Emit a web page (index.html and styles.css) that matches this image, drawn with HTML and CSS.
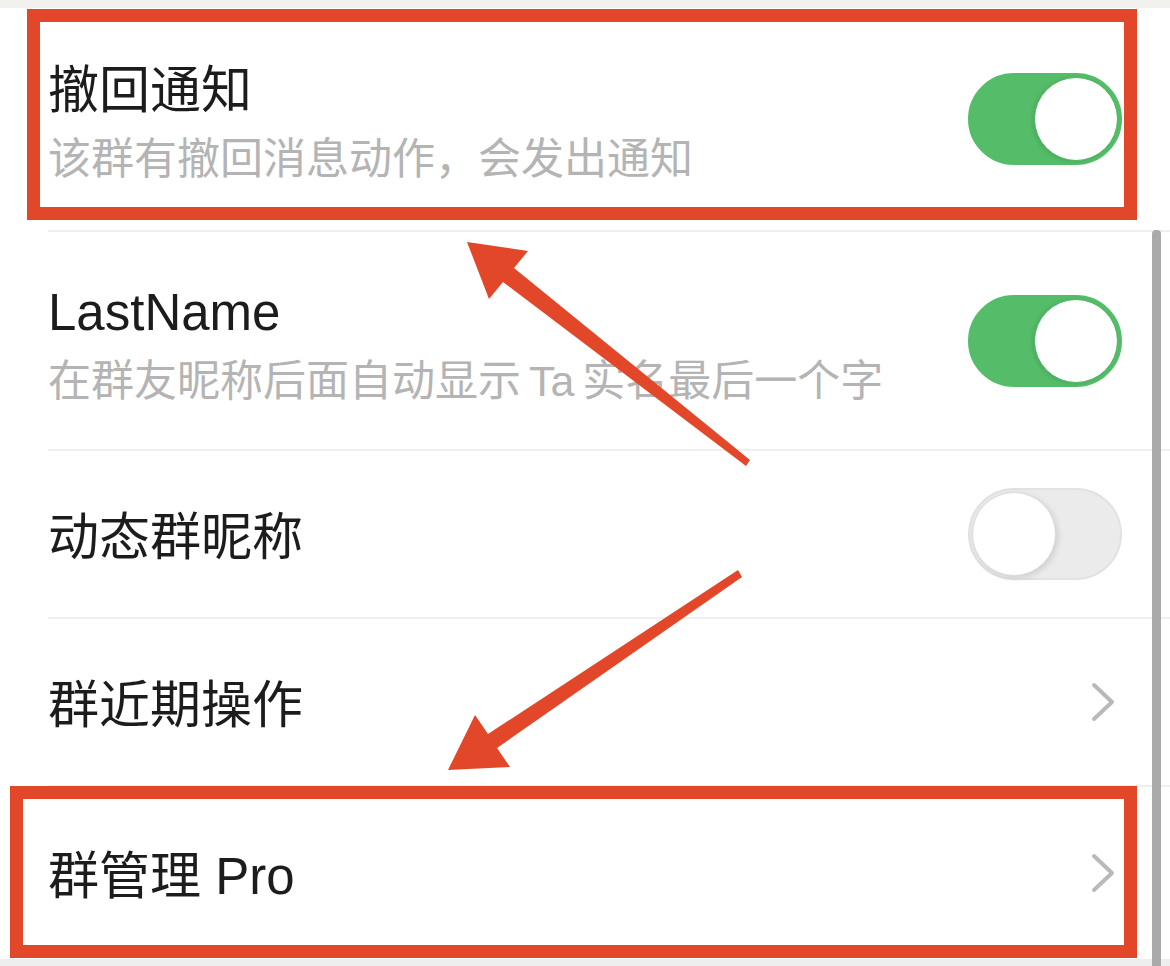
FILE: index.html
```html
<!DOCTYPE html>
<html lang="zh-CN">
<head>
  <meta charset="UTF-8">
  <meta name="viewport" content="width=device-width, initial-scale=1.0">
  <title>群设置</title>
  <link rel="stylesheet" href="styles.css">
</head>
<body>
  <div class="top-strip"></div>

  <ul class="settings">
    <li class="item item-recall">
      <div class="item-text">
        <div class="title">撤回通知</div>
        <div class="desc">该群有撤回消息动作，会发出通知</div>
      </div>
      <span class="switch on"><span class="knob"></span></span>
    </li>
    <li class="item item-lastname">
      <div class="item-text">
        <div class="title">LastName</div>
        <div class="desc">在群友昵称后面自动显示 Ta 实名最后一个字</div>
      </div>
      <span class="switch on"><span class="knob"></span></span>
    </li>
    <li class="item item-short">
      <div class="item-text">
        <div class="title">动态群昵称</div>
      </div>
      <span class="switch"><span class="knob"></span></span>
    </li>
    <li class="item item-short">
      <div class="item-text">
        <div class="title">群近期操作</div>
      </div>
      <svg class="chevron" viewBox="0 0 24 40"><polyline points="3,3 21,20 3,37" /></svg>
    </li>
    <li class="item item-pro">
      <div class="item-text">
        <div class="title">群管理 Pro</div>
      </div>
      <svg class="chevron" viewBox="0 0 24 40"><polyline points="3,3 21,20 3,37" /></svg>
    </li>
  </ul>

  <div class="bottom-strip"></div>

  <!-- annotation overlay -->
  <div class="scroll-thumb"></div>
  <div class="mark mark-top"></div>
  <div class="mark mark-bottom"></div>
  <svg class="arrows" viewBox="0 0 1170 966">
    <polygon points="467,242 528,251 514,268 750,460 746,466 503,282 489,299" />
    <polygon points="448,770 475,715 488,734 738,570 742,577 497,748 510,767" />
  </svg>
</body>
</html>
```

FILE: styles.css
```css
* {
  margin: 0;
  padding: 0;
  box-sizing: border-box;
}

body {
  width: 1170px;
  height: 966px;
  overflow: hidden;
  position: relative;
  background: #ffffff;
  font-family: "Liberation Sans", "Noto Sans CJK SC", sans-serif;
  color: #1c1c1c;
}

.top-strip {
  height: 8px;
  background: #f3f1ee;
}

.bottom-strip {
  height: 8px;
  background: #eeeeee;
}

.settings {
  list-style: none;
}

.item {
  display: flex;
  align-items: center;
  justify-content: space-between;
  margin-left: 48px;
  padding-right: 48px;
  border-bottom: 2px solid #efefef;
}

.item-recall {
  height: 224px;
}

.item-lastname {
  height: 219px;
}

.item-short {
  height: 168px;
}

.item-pro {
  height: 172px;
  border-bottom: none;
}

.item-text {
  display: flex;
  flex-direction: column;
  gap: 12px;
  padding-top: 8px;
}

.title {
  font-size: 51px;
  line-height: 60px;
  color: #1c1c1c;
}

.desc {
  font-size: 43px;
  line-height: 52px;
  color: #b4b4b4;
  word-spacing: -4px;
}

.switch {
  position: relative;
  width: 154px;
  height: 92px;
  border-radius: 46px;
  background: #ebebeb;
  border: 2px solid #e2e2e2;
}

.switch .knob {
  position: absolute;
  top: 2px;
  left: 2px;
  width: 84px;
  height: 84px;
  border-radius: 50%;
  background: #ffffff;
  border: 1px solid #dcdcdc;
  box-shadow: 2px 2px 6px rgba(0, 0, 0, 0.12);
}

.switch.on {
  background: #55bd69;
  border-color: #55bd69;
}

.switch.on .knob {
  left: auto;
  right: 2px;
  border-color: #4fb563;
  box-shadow: -2px 1px 4px rgba(0, 0, 0, 0.1);
}

.chevron {
  width: 24px;
  height: 40px;
  margin-right: 7px;
}

.chevron polyline {
  fill: none;
  stroke: #b9b9b9;
  stroke-width: 4;
  stroke-linecap: round;
  stroke-linejoin: round;
}

.scroll-thumb {
  position: absolute;
  left: 1152px;
  top: 230px;
  width: 9px;
  height: 736px;
  background: #aaaaaa;
  border-radius: 4px 4px 0 0;
}

.mark {
  position: absolute;
  border: 13px solid #e2472a;
}

.mark-top {
  left: 27px;
  top: 9px;
  width: 1110px;
  height: 211px;
}

.mark-bottom {
  left: 10px;
  top: 786px;
  width: 1127px;
  height: 172px;
}

.arrows {
  position: absolute;
  left: 0;
  top: 0;
  width: 1170px;
  height: 966px;
}

.arrows polygon {
  fill: #e2472a;
}
```
